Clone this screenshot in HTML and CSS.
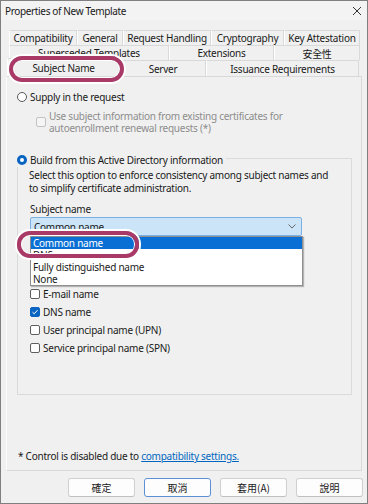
FILE: index.html
```html
<!DOCTYPE html>
<html>
<head>
  <title>Properties of New Template</title>
  <link rel="stylesheet" href="styles.css">
</head>

<body>
  <div class="window">
    <div class="titlebar">
      <span class="title">Properties of New Template</span>
      <svg class="close" width="10" height="10" viewBox="0 0 10 10">
        <path d="M1 1 L9 9 M9 1 L1 9" stroke="#333" stroke-width="1" fill="none"/>
      </svg>
    </div>

    <div class="tabs">
      <div class="tab-row row-1">
        <div class="tab">Compatibility</div>
        <div class="tab">General</div>
        <div class="tab">Request Handling</div>
        <div class="tab">Cryptography</div>
        <div class="tab">Key Attestation</div>
      </div>
      <div class="tab-row row-2">
        <div class="tab">Superseded Templates</div>
        <div class="tab">Extensions</div>
        <div class="tab cjk">安全性</div>
      </div>
      <div class="tab-row row-3">
        <div class="tab tab-active">Subject Name</div>
        <div class="tab">Server</div>
        <div class="tab">Issuance Requirements</div>
      </div>
    </div>

    <div class="panel">
      <div class="option">
        <span class="radio"></span>
        <span>Supply in the request</span>
      </div>
      <div class="option option-sub disabled">
        <span class="checkbox"></span>
        <span>Use subject information from existing certificates for<br>autoenrollment renewal requests (*)</span>
      </div>

      <div class="group">
        <div class="option legend">
          <span class="radio radio-on"></span>
          <span>Build from this Active Directory information</span>
        </div>
        <p class="desc">Select this option to enforce consistency among subject names and<br>to simplify certificate administration.</p>
        <div class="field-label">Subject name</div>
        <div class="combo">
          <span>Common name</span>
          <svg class="chevron" width="8" height="5" viewBox="0 0 8 5">
            <path d="M0.5 0.5 L4 4 L7.5 0.5" stroke="#666" stroke-width="1" fill="none"/>
          </svg>
          <ul class="dropdown">
            <li class="selected">Common name</li>
            <li>DNS name</li>
            <li>Fully distinguished name</li>
            <li>None</li>
          </ul>
        </div>

        <div class="checks">
          <!-- these two rows sit under the open list -->
          <div class="option covered"><span class="checkbox"></span><span>Include e-mail name in subject name</span></div>
          <div class="option covered"><span>Include this information in alternate subject name:</span></div>
          <div class="option"><span class="checkbox"></span><span>E-mail name</span></div>
          <div class="option"><span class="checkbox checkbox-on"></span><span>DNS name</span></div>
          <div class="option"><span class="checkbox"></span><span>User principal name (UPN)</span></div>
          <div class="option"><span class="checkbox"></span><span>Service principal name (SPN)</span></div>
        </div>
      </div>

      <p class="note">* Control is disabled due to <a href="#">compatibility settings.</a></p>
    </div>

    <div class="buttons">
      <button class="btn">確定</button>
      <button class="btn btn-focus">取消</button>
      <button class="btn">套用(A)</button>
      <button class="btn">說明</button>
    </div>

    <!-- annotation rings -->
    <div class="ring ring-tab"></div>
    <div class="ring ring-item"></div>
  </div>
</body>
</html>
```

FILE: styles.css
```css
* {
  box-sizing: border-box;
}

body {
  margin: 0;
  background-color: #f0f0f0;
  font-family: "Noto Sans", "Noto Sans CJK TC", sans-serif;
  font-size: 10px;
  letter-spacing: -0.25px;
  color: #1a1a1a;
}

.window {
  position: relative;
  width: 368px;
  height: 504px;
  border: 1px solid #7f7f7f;
  background-color: #f0f0f0;
}

.titlebar {
  height: 19px;
  display: flex;
  align-items: center;
  justify-content: space-between;
  padding: 0 5px 0 4px;
  background-color: #f3f3f3;
}

.title {
  font-size: 10px;
  letter-spacing: -0.35px;
}

/* tabs */
.tabs {
  margin-top: 10px;
}

.tab-row {
  display: grid;
  height: 15px;
}

.row-1 {
  grid-template-columns: 68px 46px 88px 73px 76px;
  margin-left: 8px;
}

.row-2 {
  grid-template-columns: 160px 105px 86px;
  margin-left: 8px;
}

.row-3 {
  grid-template-columns: 113px 86px 153px;
  margin-left: 6px;
  height: 16px;
}

.tab {
  display: flex;
  align-items: center;
  justify-content: center;
  border: 1px solid #d9d9d9;
  border-bottom: none;
  border-left-color: #fff;
  background-color: #f0f0f0;
  white-space: nowrap;
  overflow: hidden;
}

.tab-active {
  height: 18px;
  margin-top: -2px;
  background-color: #f0f0f0;
}

.cjk {
  font-family: "Noto Sans CJK TC", sans-serif;
}

/* panel */
.panel {
  display: flex;
  flex-direction: column;
  margin-left: 5px;
  width: 356px;
  height: 395px;
  padding: 13px 9px 7px 10px;
  border: 1px solid #d9d9d9;
  border-left-color: #fafafa;
}

.option {
  display: flex;
  align-items: center;
  height: 14px;
  gap: 3px;
  white-space: nowrap;
}

.option-sub {
  align-items: flex-start;
  height: auto;
  margin: 6px 0 0 19px;
  line-height: 12px;
}

.option-sub .checkbox {
  margin-top: 7px;
}

.disabled {
  color: #8d8d8d;
}

.radio {
  flex: none;
  width: 10px;
  height: 10px;
  border: 1px solid #595959;
  border-radius: 50%;
  background-color: #fff;
}

.radio-on {
  border: 3px solid #0a64c2;
}

.checkbox {
  flex: none;
  width: 10px;
  height: 10px;
  border: 1px solid #5e5e5e;
  border-radius: 2px;
  background-color: #fff;
}

.disabled .checkbox {
  border-color: #c2c2c2;
  background-color: #f5f5f5;
}

.checkbox-on {
  border-color: #0a64c2;
  background: #0a64c2 url("data:image/svg+xml;utf8,<svg xmlns='http://www.w3.org/2000/svg' width='8' height='8' viewBox='0 0 8 8'><path d='M1.5 4.2 L3.2 5.8 L6.5 2.2' stroke='white' stroke-width='1' fill='none'/></svg>") center no-repeat;
}

/* group box */
.group {
  margin-top: 24px;
  height: 237px;
  padding: 0 0 0 11px;
  border: 1px solid #dadada;
}

.legend {
  margin: -6px 0 0 -12px;
  padding-right: 3px;
  width: max-content;
  background-color: #f0f0f0;
}

.desc {
  margin: 2px 0 0;
  line-height: 13px;
}

.field-label {
  margin-top: 8px;
  line-height: 13px;
  padding-left: 1px;
}

.combo {
  position: relative;
  display: flex;
  align-items: center;
  justify-content: space-between;
  margin: 1px 0 0 1px;
  width: 272px;
  height: 19px;
  padding: 0 5px 0 3px;
  background-color: #cce4f7;
  border: 1px solid #7bb0e2;
  border-radius: 2px;
}

.dropdown {
  position: absolute;
  top: 18px;
  left: -1px;
  width: 273px;
  margin: 0;
  padding: 0;
  list-style: none;
  background-color: #fff;
  border: 1px solid #8f8f8f;
  box-shadow: 1px 1px 1px rgba(0, 0, 0, 0.25);
  z-index: 1;
}

.dropdown li {
  height: 12px;
  line-height: 12px;
  padding-left: 2px;
}

.dropdown .selected {
  background-color: #0a6fd4;
  color: #fff;
}

.checks {
  margin-top: 13px;
}

.checks .option {
  height: 18px;
  padding-left: 1px;
}

.checks .covered {
  visibility: hidden;
}

/* footer */
.note {
  margin: auto 0 0 1px;
  line-height: 13px;
}

.note a {
  color: #0067c0;
}

.buttons {
  display: flex;
  justify-content: flex-end;
  gap: 9px;
  margin-top: 7px;
  padding-right: 4px;
}

.btn {
  width: 67px;
  height: 19px;
  padding: 0;
  font-family: "Noto Sans CJK TC", sans-serif;
  font-size: 10px;
  color: #1a1a1a;
  background-color: #fdfdfd;
  border: 1px solid #d0d0d0;
  border-bottom-color: #c0c0c0;
  border-radius: 3px;
}

.btn-focus {
  border-color: #5b8fd6;
}

/* annotation rings */
.ring {
  position: absolute;
  border: 4px solid #a93a68;
  border-radius: 13px;
  box-shadow: 0 0 0 2px #fff, inset 0 0 0 1px #fff;
  z-index: 2;
}

.ring-tab {
  left: 8px;
  top: 55px;
  width: 115px;
  height: 26px;
}

.ring-item {
  left: 16px;
  top: 230px;
  width: 122px;
  height: 27px;
}
```
